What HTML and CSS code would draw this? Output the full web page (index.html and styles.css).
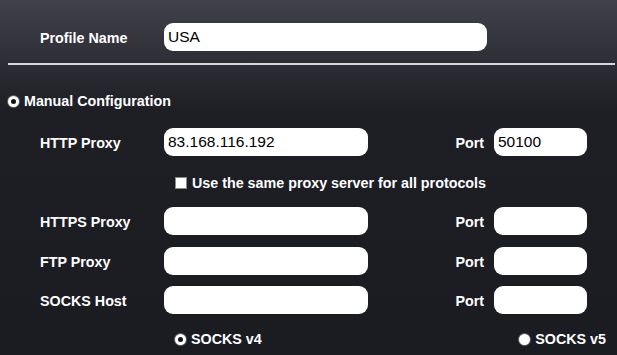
FILE: index.html
```html
<!DOCTYPE html>
<html lang="en">
<head>
    <meta charset="UTF-8">
    <title>Proxy Profile</title>
    <link rel="stylesheet" href="styles.css">
</head>
<body>
    <div class="panel">
        <div class="profile-row">
            <label class="field-label">Profile Name</label>
            <input class="text-input profile-input" type="text" value="USA">
        </div>

        <div class="divider"></div>

        <div class="option-row manual">
            <span class="radio checked"></span>
            <span class="option-text">Manual Configuration</span>
        </div>

        <div class="proxy-row http-row">
            <label class="field-label">HTTP Proxy</label>
            <input class="text-input host-input" type="text" value="83.168.116.192">
            <label class="port-label">Port</label>
            <input class="text-input port-input" type="text" value="50100">
        </div>

        <div class="option-row same-row">
            <span class="checkbox"></span>
            <span class="option-text">Use the same proxy server for all protocols</span>
        </div>

        <div class="proxy-row https-row">
            <label class="field-label">HTTPS Proxy</label>
            <input class="text-input host-input" type="text">
            <label class="port-label">Port</label>
            <input class="text-input port-input" type="text">
        </div>

        <div class="proxy-row ftp-row">
            <label class="field-label">FTP Proxy</label>
            <input class="text-input host-input" type="text">
            <label class="port-label">Port</label>
            <input class="text-input port-input" type="text">
        </div>

        <div class="proxy-row socks-row">
            <label class="field-label">SOCKS Host</label>
            <input class="text-input host-input" type="text">
            <label class="port-label">Port</label>
            <input class="text-input port-input" type="text">
        </div>

        <div class="socks-versions">
            <div class="option-row">
                <span class="radio checked"></span>
                <span class="option-text">SOCKS v4</span>
            </div>
            <div class="option-row">
                <span class="radio"></span>
                <span class="option-text">SOCKS v5</span>
            </div>
        </div>
    </div>
</body>
</html>
```

FILE: styles.css
```css
* {
    margin: 0;
    padding: 0;
    box-sizing: border-box;
}

body {
    width: 617px;
    height: 355px;
    overflow: hidden;
    background: linear-gradient(180deg,
        #41414b 0px,
        #2e2e36 60px,
        #1e1f24 110px,
        #1b1c21 355px);
    font-family: "Liberation Sans", Arial, sans-serif;
    color: #fff;
}

.panel {
    padding-top: 23px;
}

.profile-row,
.proxy-row {
    display: flex;
    align-items: center;
    height: 28px;
    padding-left: 40px;
}

.field-label,
.port-label,
.option-text {
    font-size: 14.3px;
    font-weight: 700;
    color: #fff;
    padding-top: 2px;
}

.field-label {
    width: 124px;
}

.text-input {
    height: 28px;
    border: none;
    outline: none;
    border-radius: 9px;
    background: #fff;
    color: #000;
    font-family: "Liberation Sans", Arial, sans-serif;
    font-size: 15.5px;
    padding: 0 4px;
}

.profile-input {
    width: 323px;
}

.host-input {
    width: 204px;
}

.port-label {
    width: 126px;
    text-align: right;
    padding-right: 10px;
}

.port-input {
    width: 93px;
}

.divider {
    height: 2px;
    margin: 12px 2px 0 8px;
    background: #d6d6d6;
}

.option-row {
    display: flex;
    align-items: center;
    gap: 5px;
    height: 16px;
}

.option-row .option-text {
    padding-top: 0;
}

.manual {
    margin-top: 28px;
    padding-left: 8px;
}

.http-row {
    margin-top: 19px;
}

.same-row {
    margin-top: 19px;
    padding-left: 175px;
}

.https-row {
    margin-top: 16px;
}

.ftp-row {
    margin-top: 12px;
}

.socks-row {
    margin-top: 11px;
}

.socks-versions {
    display: flex;
    justify-content: space-between;
    margin-top: 17px;
    padding-left: 175px;
    padding-right: 11px;
}

.radio {
    width: 11px;
    height: 11px;
    border-radius: 50%;
    background: #fff;
    box-shadow: 0 0 0 1px rgba(160, 160, 160, 0.5);
    display: flex;
    align-items: center;
    justify-content: center;
}

.radio.checked::after {
    content: "";
    width: 5px;
    height: 5px;
    border-radius: 50%;
    background: #111;
}

.checkbox {
    width: 12px;
    height: 12px;
    background: #fff;
    border: 1px solid #8a8a8a;
}
```
